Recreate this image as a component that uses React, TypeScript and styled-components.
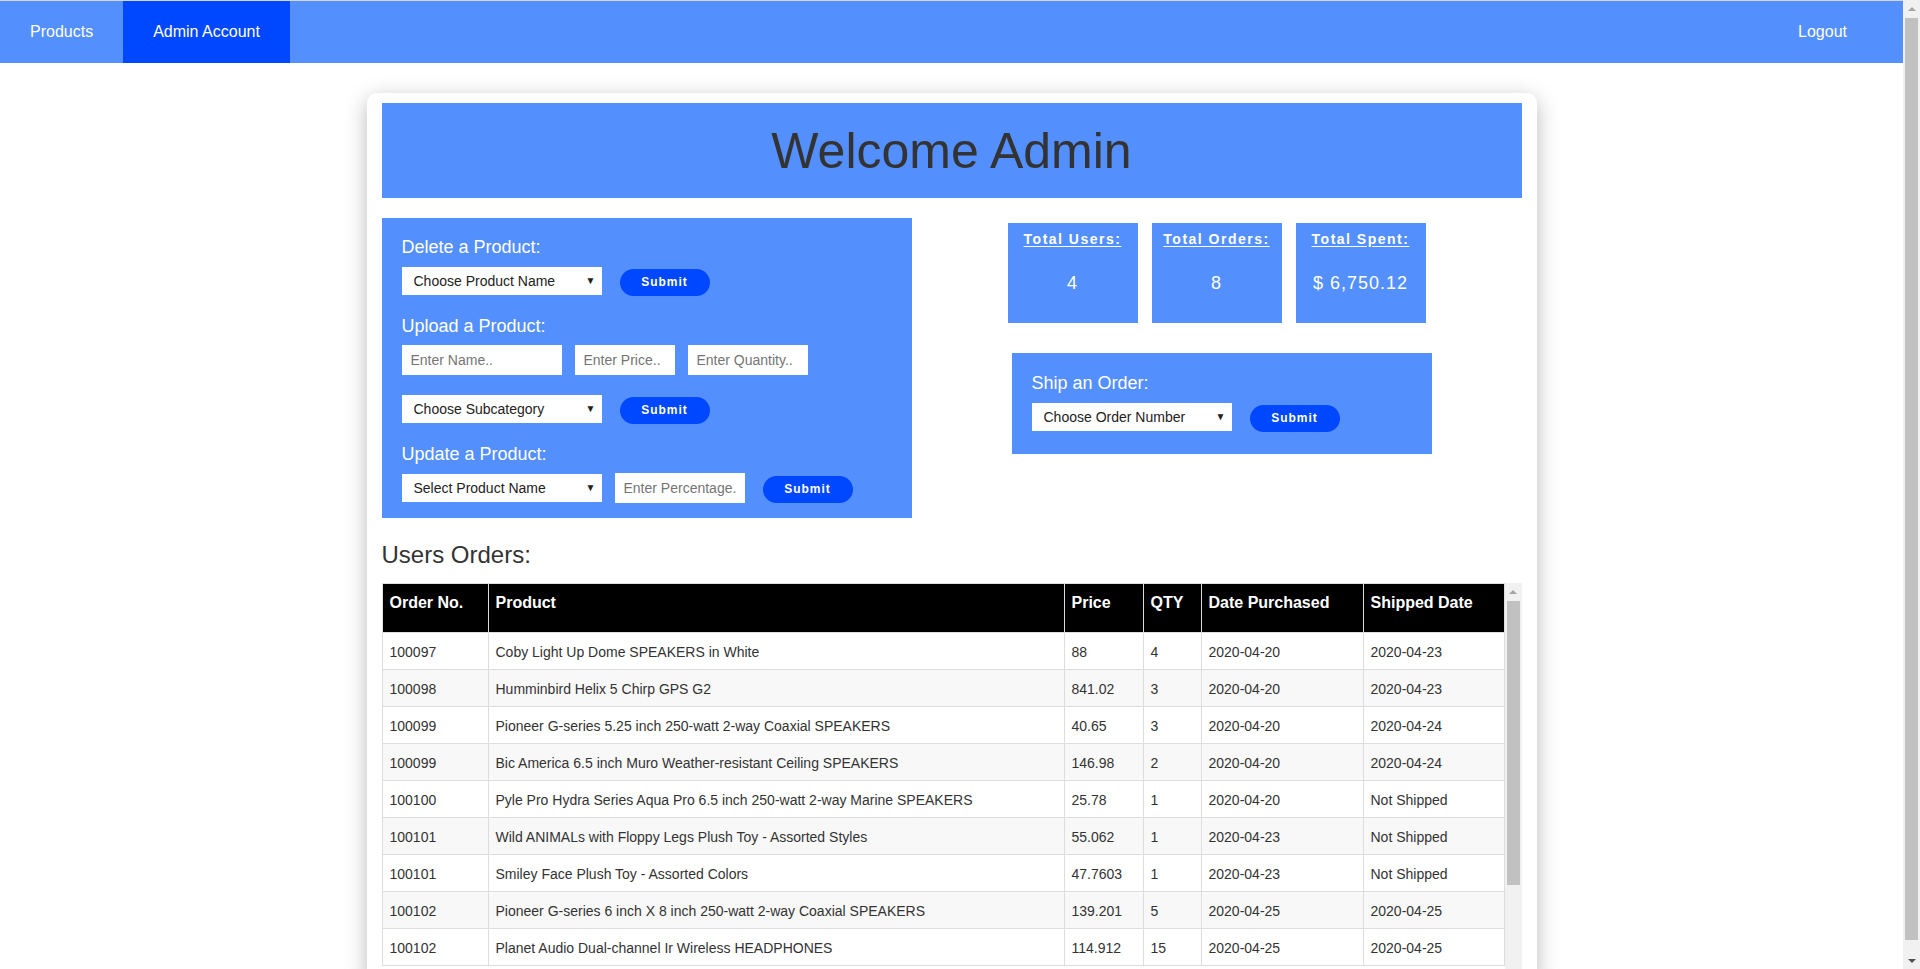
import React from "react";
import styled, { createGlobalStyle } from "styled-components";

const Global = createGlobalStyle`
  html, body { margin: 0; padding: 0; background: #fff; }
  body { font-family: "Liberation Sans", Arial, sans-serif; color: #333; }
  * { box-sizing: border-box; }
`;

const LIGHT = "#548ffe";
const DARK = "#0048ff";

const Shell = styled.div`
  margin-right: 17px;
`;

const Nav = styled.nav`
  display: flex;
  height: 63px;
  border-top: 1px solid #d6d6d6;
  background: ${LIGHT};
  padding-right: 26px;
`;

const NavItem = styled.a<{ $active?: boolean; $right?: boolean }>`
  display: flex;
  align-items: center;
  padding: 0 30px;
  font-size: 16px;
  color: #fff;
  text-decoration: none;
  background: ${(p) => (p.$active ? DARK : "transparent")};
  margin-left: ${(p) => (p.$right ? "auto" : "0")};
`;

const Page = styled.main`
  padding: 30px 0 0;
`;

const Card = styled.section`
  width: 1170px;
  margin: 0 auto;
  background: #fff;
  border-radius: 10px;
  box-shadow: 0 6px 22px rgba(0, 0, 0, 0.28);
  padding: 10px 15px 10px;
`;

const Banner = styled.h1`
  margin: 0;
  height: 95px;
  display: flex;
  align-items: center;
  justify-content: center;
  background: ${LIGHT};
  font-size: 50px;
  font-weight: 400;
  color: #333;
`;

const Top = styled.div`
  display: flex;
  margin-top: 20px;
`;

const Panel = styled.div<{ $w: number; $pt: number; $pb: number }>`
  width: ${(p) => p.$w}px;
  background: ${LIGHT};
  padding: ${(p) => p.$pt}px 20px ${(p) => p.$pb}px;
  display: flex;
  flex-direction: column;
  flex-shrink: 0;
`;

const Label = styled.div`
  font-size: 18px;
  line-height: 20px;
  color: #fff;
  padding-top: 1px;
  margin-bottom: 9px;
`;

const Row = styled.div<{ $gapAfter?: boolean }>`
  display: flex;
  align-items: center;
  height: 30px;
  margin-bottom: ${(p) => (p.$gapAfter ? 19 : 0)}px;
`;

const SelectWrap = styled.span<{ $w: number }>`
  position: relative;
  display: inline-flex;
  width: ${(p) => p.$w}px;
  height: 28px;
  margin-right: 13px;
  &::after {
    content: "▼";
    position: absolute;
    right: 6px;
    top: 8px;
    font-size: 10px;
    color: #222;
    pointer-events: none;
  }
`;

const Select = styled.select`
  appearance: none;
  -webkit-appearance: none;
  width: 100%;
  height: 100%;
  border: none;
  border-radius: 0;
  background: #fff;
  padding: 0 20px 0 12px;
  font-family: "Liberation Sans", Arial, sans-serif;
  font-size: 14px;
  color: #222;
  outline: none;
`;

const Input = styled.input<{ $w: number }>`
  width: ${(p) => p.$w}px;
  height: 30px;
  border: none;
  background: #fff;
  padding: 0 8px 0 9px;
  margin-right: 13px;
  font-family: "Liberation Sans", Arial, sans-serif;
  font-size: 14px;
  color: #222;
  outline: none;
  &::placeholder { color: #757575; }
`;

const Submit = styled.button`
  width: 90px;
  height: 27px;
  margin-left: 5px;
  margin-top: 2px;
  border: none;
  border-radius: 14px;
  background: ${DARK};
  color: #fff;
  font-family: "Liberation Sans", Arial, sans-serif;
  font-size: 12px;
  font-weight: 700;
  letter-spacing: 1px;
  cursor: pointer;
`;

const RightCol = styled.div`
  flex: 1;
  display: flex;
  flex-direction: column;
  align-items: center;
  padding-top: 5px;
`;

const Stats = styled.div`
  display: flex;
  gap: 14px;
  margin-bottom: 30px;
`;

const Stat = styled.div`
  width: 130px;
  height: 100px;
  background: ${LIGHT};
  color: #fff;
  display: flex;
  flex-direction: column;
  align-items: center;
  padding-top: 8px;
`;

const StatTitle = styled.div`
  font-size: 14px;
  line-height: 16px;
  font-weight: 700;
  letter-spacing: 1.5px;
  text-decoration: underline;
  text-underline-offset: 2px;
`;

const StatValue = styled.div`
  margin-top: 26px;
  font-size: 18px;
  line-height: 21px;
  letter-spacing: 1px;
`;

const ShipWrap = styled.div`
  margin-left: 10px;
`;

const Heading = styled.h2`
  margin: 23px 0 14px;
  font-size: 24px;
  line-height: 28px;
  font-weight: 400;
  color: #333;
`;

const Scroller = styled.div`
  display: flex;
  height: 390px;
`;

const Clip = styled.div`
  flex: 1;
  overflow: hidden;
`;

const Track = styled.div<{ $fixed?: boolean }>`
  width: 17px;
  flex-shrink: 0;
  background: #f1f1f1;
  display: flex;
  flex-direction: column;
  ${(p) =>
    p.$fixed
      ? `position: fixed; top: 0; right: 0; height: 100vh; z-index: 10;`
      : ``}
`;

const ArrowBox = styled.div<{ $down?: boolean; $dark?: boolean }>`
  height: 17px;
  flex-shrink: 0;
  display: flex;
  align-items: center;
  justify-content: center;
  margin-top: ${(p) => (p.$down ? "auto" : "0")};
  &::before {
    content: "";
    width: 0;
    height: 0;
    border-left: 4px solid transparent;
    border-right: 4px solid transparent;
    ${(p) =>
      p.$down
        ? `border-top: 4px solid ${p.$dark ? "#505050" : "#a3a3a3"};`
        : `border-bottom: 4px solid ${p.$dark ? "#505050" : "#a3a3a3"};`}
  }
`;

const Thumb = styled.div<{ $h: number }>`
  height: ${(p) => p.$h}px;
  margin: 1px 2px 0;
  background: #c1c1c1;
  flex-shrink: 0;
`;

const Table = styled.table`
  width: 100%;
  border-collapse: collapse;
  table-layout: fixed;
  font-family: "Liberation Sans", Arial, sans-serif;
`;

const Th = styled.th`
  background: #000;
  color: #fff;
  text-align: left;
  vertical-align: top;
  font-size: 16px;
  line-height: 18px;
  font-weight: 700;
  padding: 10px 7px 20px 7px;
  border: 1px solid #ddd;
`;

const Tr = styled.tr`
  &:nth-child(even) { background: #f8f8f8; }
`;

const Td = styled.td`
  font-size: 14px;
  line-height: 16px;
  color: #333;
  padding: 11px 7px 9px;
  border: 1px solid #ddd;
  white-space: nowrap;
  overflow: hidden;
`;

const cols = [106, 576, 79, 58, 162, 141];
const heads = ["Order No.", "Product", "Price", "QTY", "Date Purchased", "Shipped Date"];

const rows: string[][] = [
  ["100097", "Coby Light Up Dome SPEAKERS in White", "88", "4", "2020-04-20", "2020-04-23"],
  ["100098", "Humminbird Helix 5 Chirp GPS G2", "841.02", "3", "2020-04-20", "2020-04-23"],
  ["100099", "Pioneer G-series 5.25 inch 250-watt 2-way Coaxial SPEAKERS", "40.65", "3", "2020-04-20", "2020-04-24"],
  ["100099", "Bic America 6.5 inch Muro Weather-resistant Ceiling SPEAKERS", "146.98", "2", "2020-04-20", "2020-04-24"],
  ["100100", "Pyle Pro Hydra Series Aqua Pro 6.5 inch 250-watt 2-way Marine SPEAKERS", "25.78", "1", "2020-04-20", "Not Shipped"],
  ["100101", "Wild ANIMALs with Floppy Legs Plush Toy - Assorted Styles", "55.062", "1", "2020-04-23", "Not Shipped"],
  ["100101", "Smiley Face Plush Toy - Assorted Colors", "47.7603", "1", "2020-04-23", "Not Shipped"],
  ["100102", "Pioneer G-series 6 inch X 8 inch 250-watt 2-way Coaxial SPEAKERS", "139.201", "5", "2020-04-25", "2020-04-25"],
  ["100102", "Planet Audio Dual-channel Ir Wireless HEADPHONES", "114.912", "15", "2020-04-25", "2020-04-25"],
];

function Dropdown({ w, text }: { w: number; text: string }) {
  return (
    <SelectWrap $w={w}>
      <Select defaultValue="">
        <option value="">{text}</option>
      </Select>
    </SelectWrap>
  );
}

export default function App() {
  return (
    <>
      <Global />
      <Track $fixed>
        <ArrowBox />
        <Thumb $h={922} />
        <ArrowBox $down $dark />
      </Track>
      <Shell>
        <Nav>
          <NavItem href="#">Products</NavItem>
          <NavItem href="#" $active>Admin Account</NavItem>
          <NavItem href="#" $right>Logout</NavItem>
        </Nav>
        <Page>
          <Card>
            <Banner>Welcome Admin</Banner>
            <Top>
              <Panel $w={530} $pt={18} $pb={15}>
                <Label>Delete a Product:</Label>
                <Row $gapAfter>
                  <Dropdown w={200} text="Choose Product Name" />
                  <Submit>Submit</Submit>
                </Row>
                <Label>Upload a Product:</Label>
                <Row $gapAfter>
                  <Input $w={160} placeholder="Enter Name.." />
                  <Input $w={100} placeholder="Enter Price.." />
                  <Input $w={120} placeholder="Enter Quantity.." />
                </Row>
                <Row $gapAfter>
                  <Dropdown w={200} text="Choose Subcategory" />
                  <Submit>Submit</Submit>
                </Row>
                <Label>Update a Product:</Label>
                <Row>
                  <Dropdown w={200} text="Select Product Name" />
                  <Input $w={130} placeholder="Enter Percentage.." />
                  <Submit>Submit</Submit>
                </Row>
              </Panel>
              <RightCol>
                <Stats>
                  <Stat>
                    <StatTitle>Total Users:</StatTitle>
                    <StatValue>4</StatValue>
                  </Stat>
                  <Stat>
                    <StatTitle>Total Orders:</StatTitle>
                    <StatValue>8</StatValue>
                  </Stat>
                  <Stat>
                    <StatTitle>Total Spent:</StatTitle>
                    <StatValue>$ 6,750.12</StatValue>
                  </Stat>
                </Stats>
                <ShipWrap>
                  <Panel $w={420} $pt={19} $pb={22}>
                    <Label>Ship an Order:</Label>
                    <Row>
                      <Dropdown w={200} text="Choose Order Number" />
                      <Submit>Submit</Submit>
                    </Row>
                  </Panel>
                </ShipWrap>
              </RightCol>
            </Top>
            <Heading>Users Orders:</Heading>
            <Scroller>
              <Clip>
                <Table>
                  <colgroup>
                    {cols.map((c, i) => (
                      <col key={i} style={{ width: c }} />
                    ))}
                  </colgroup>
                  <thead>
                    <tr>
                      {heads.map((h) => (
                        <Th key={h}>{h}</Th>
                      ))}
                    </tr>
                  </thead>
                  <tbody>
                    {rows.map((r, i) => (
                      <Tr key={i}>
                        {r.map((c, j) => (
                          <Td key={j}>{c}</Td>
                        ))}
                      </Tr>
                    ))}
                  </tbody>
                </Table>
              </Clip>
              <Track>
                <ArrowBox />
                <Thumb $h={284} />
              </Track>
            </Scroller>
          </Card>
        </Page>
      </Shell>
    </>
  );
}
